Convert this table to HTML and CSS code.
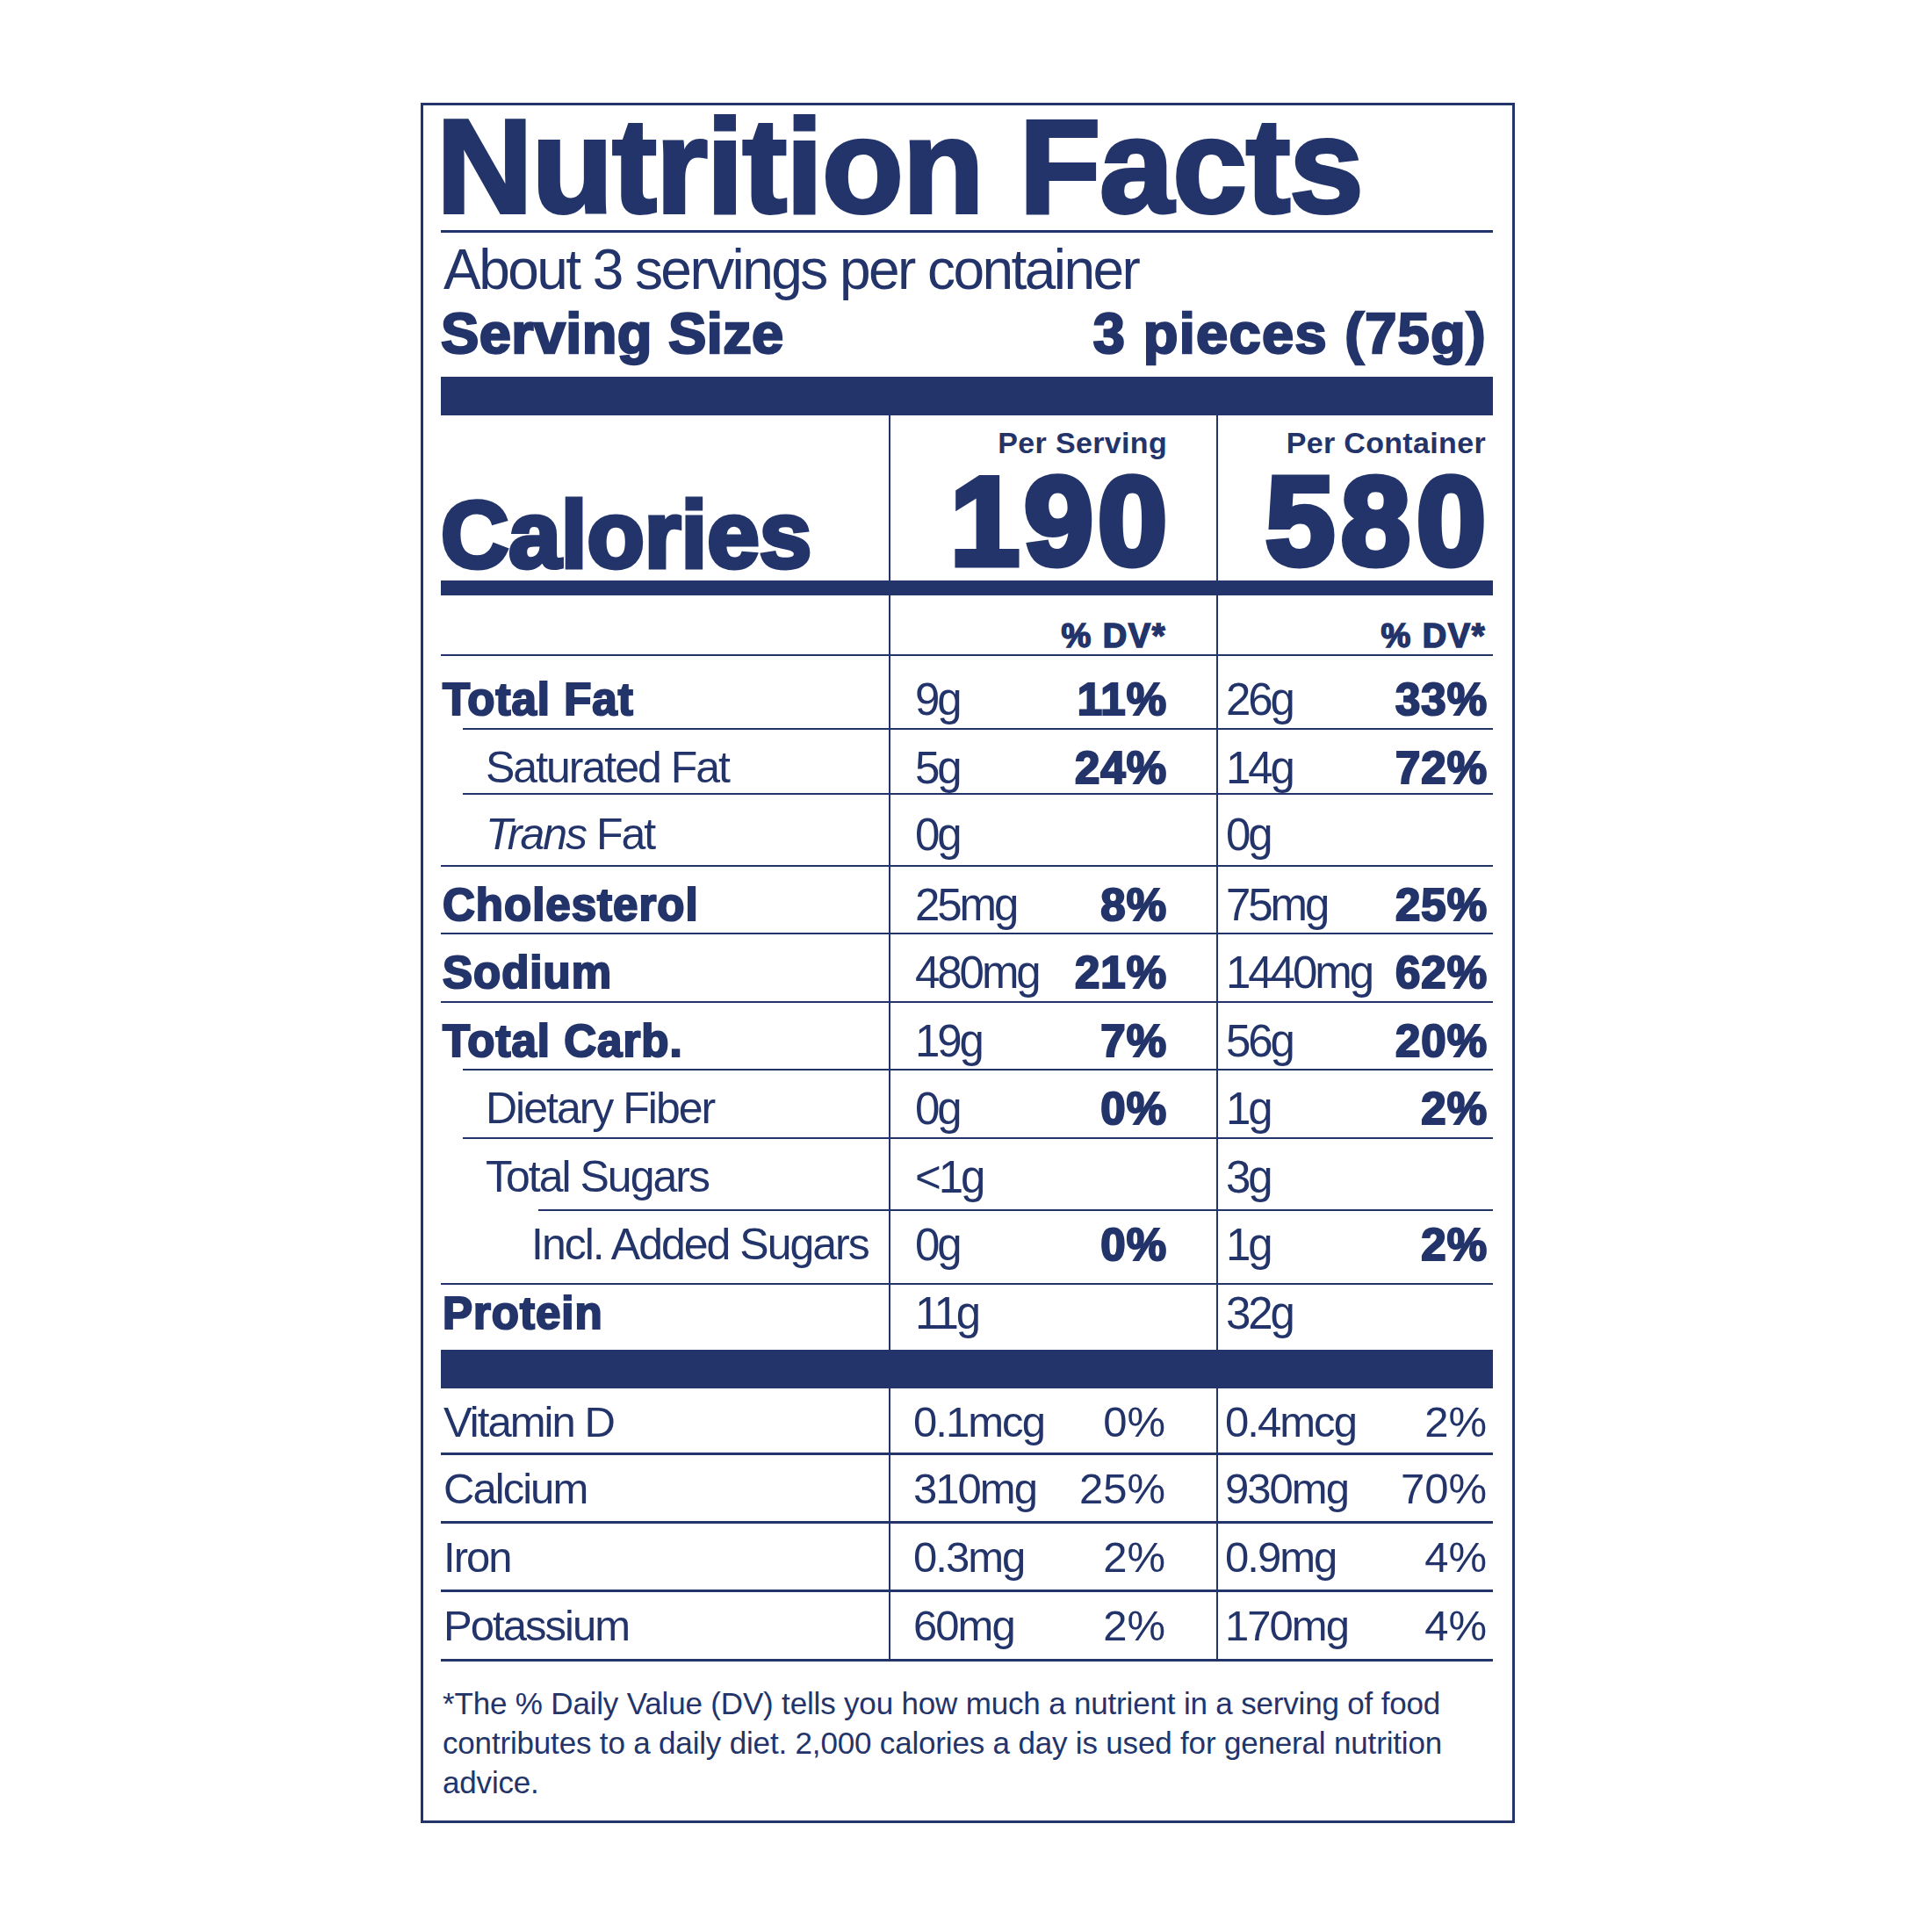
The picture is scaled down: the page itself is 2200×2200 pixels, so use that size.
FILE: index.html
```html
<!DOCTYPE html>
<html lang="en">
<head>
<meta charset="utf-8">
<title>Nutrition Facts</title>
<link rel="stylesheet" href="styles.css">
</head>
<body>
<div class="label">
  <h1 class="title">Nutrition Facts</h1>
  <div class="rule"></div>
  <div class="servings">About 3 servings per container</div>
  <div class="serving-size"><span class="ss-label">Serving Size</span><span class="ss-value">3 pieces (75g)</span></div>
  <div class="bar bar-lg"></div>

  <div class="grid3 cal">
    <div class="cal-name">Calories</div>
    <div class="cal-col serv"><div class="cal-head">Per Serving</div><div class="cal-num">190</div></div>
    <div class="cal-col cont"><div class="cal-head">Per Container</div><div class="cal-num">580</div></div>
  </div>
  <div class="bar bar-md"></div>

  <div class="grid3 nutrients">
    <div class="row head">
      <div class="name"></div>
      <div class="val c2">% DV*</div>
      <div class="val c3">% DV*</div>
    </div>
    <div class="row first ind1">
      <div class="name bold">Total Fat</div>
      <div class="val c2"><span class="amt">9g</span><span class="dv">11%</span></div>
      <div class="val c3"><span class="amt">26g</span><span class="dv">33%</span></div>
    </div>
    <div class="row ind1">
      <div class="name sub">Saturated Fat</div>
      <div class="val c2"><span class="amt">5g</span><span class="dv">24%</span></div>
      <div class="val c3"><span class="amt">14g</span><span class="dv">72%</span></div>
    </div>
    <div class="row trans">
      <div class="name sub"><i>Trans</i> Fat</div>
      <div class="val c2"><span class="amt">0g</span></div>
      <div class="val c3"><span class="amt">0g</span></div>
    </div>
    <div class="row">
      <div class="name bold">Cholesterol</div>
      <div class="val c2"><span class="amt">25mg</span><span class="dv">8%</span></div>
      <div class="val c3"><span class="amt">75mg</span><span class="dv">25%</span></div>
    </div>
    <div class="row">
      <div class="name bold">Sodium</div>
      <div class="val c2"><span class="amt">480mg</span><span class="dv">21%</span></div>
      <div class="val c3"><span class="amt">1440mg</span><span class="dv">62%</span></div>
    </div>
    <div class="row ind1">
      <div class="name bold">Total Carb.</div>
      <div class="val c2"><span class="amt">19g</span><span class="dv">7%</span></div>
      <div class="val c3"><span class="amt">56g</span><span class="dv">20%</span></div>
    </div>
    <div class="row ind1">
      <div class="name sub">Dietary Fiber</div>
      <div class="val c2"><span class="amt">0g</span><span class="dv">0%</span></div>
      <div class="val c3"><span class="amt">1g</span><span class="dv">2%</span></div>
    </div>
    <div class="row ind2">
      <div class="name sub">Total Sugars</div>
      <div class="val c2"><span class="amt">&lt;1g</span></div>
      <div class="val c3"><span class="amt">3g</span></div>
    </div>
    <div class="row added">
      <div class="name added-name">Incl. Added Sugars</div>
      <div class="val c2"><span class="amt">0g</span><span class="dv">0%</span></div>
      <div class="val c3"><span class="amt">1g</span><span class="dv">2%</span></div>
    </div>
    <div class="row protein">
      <div class="name bold">Protein</div>
      <div class="val c2"><span class="amt">11g</span></div>
      <div class="val c3"><span class="amt">32g</span></div>
    </div>
  </div>
  <div class="bar bar-lg"></div>

  <div class="grid3 vitamins">
    <div class="row">
      <div class="name">Vitamin D</div>
      <div class="val c2"><span class="amt">0.1mcg</span><span class="dv">0%</span></div>
      <div class="val c3"><span class="amt">0.4mcg</span><span class="dv">2%</span></div>
    </div>
    <div class="row">
      <div class="name">Calcium</div>
      <div class="val c2"><span class="amt">310mg</span><span class="dv">25%</span></div>
      <div class="val c3"><span class="amt">930mg</span><span class="dv">70%</span></div>
    </div>
    <div class="row">
      <div class="name">Iron</div>
      <div class="val c2"><span class="amt">0.3mg</span><span class="dv">2%</span></div>
      <div class="val c3"><span class="amt">0.9mg</span><span class="dv">4%</span></div>
    </div>
    <div class="row">
      <div class="name">Potassium</div>
      <div class="val c2"><span class="amt">60mg</span><span class="dv">2%</span></div>
      <div class="val c3"><span class="amt">170mg</span><span class="dv">4%</span></div>
    </div>
  </div>

  <p class="footnote">*The % Daily Value (DV) tells you how much a nutrient in a serving of food contributes to a daily diet. 2,000 calories a day is used for general nutrition advice.</p>
</div>
</body>
</html>
```
FILE: styles.css
```css
:root {
  --navy: #23346a;
}

html, body {
  margin: 0;
  padding: 0;
  background: #ffffff;
}

body {
  font-family: "Liberation Sans", Arial, Helvetica, sans-serif;
  color: var(--navy);
}

.label {
  box-sizing: content-box;
  width: 1198px;
  margin: 117px 0 0 479px;
  padding: 0 22px 0 20px;
  border: 3px solid var(--navy);
}

.title {
  margin: 0 0 0 -5px;
  padding-bottom: 3px;
  font-size: 152px;
  line-height: 139px;
  font-weight: 700;
  letter-spacing: -1.2px;
  white-space: nowrap;
  -webkit-text-stroke: 4px var(--navy);
}

.rule {
  height: 3px;
  background: var(--navy);
}

.servings {
  padding-left: 3px;
  font-size: 64px;
  line-height: 84px;
  letter-spacing: -0.04em;
  white-space: nowrap;
}

.serving-size {
  display: flex;
  justify-content: space-between;
  margin-bottom: 19px;
  padding-right: 8px;
  font-size: 65px;
  line-height: 61px;
  font-weight: 700;
  white-space: nowrap;
  -webkit-text-stroke: 2.5px var(--navy);
}

.ss-label {
  letter-spacing: 0.005em;
}

.ss-value {
  letter-spacing: 0.02em;
  margin-right: -1px;
}

.bar {
  background: var(--navy);
}

.bar-lg {
  height: 44px;
}

.bar-md {
  height: 17px;
}

.grid3 {
  display: grid;
  grid-template-columns: 510px 373px 315px;
}

/* Calories block */
.cal {
  height: 188px;
}

.cal-name {
  display: flex;
  align-items: flex-end;
  padding-bottom: 7px;
  font-size: 107px;
  line-height: 90px;
  font-weight: 700;
  letter-spacing: 0;
  white-space: nowrap;
  -webkit-text-stroke: 5px var(--navy);
}

.cal-col {
  display: flex;
  flex-direction: column;
  align-items: flex-end;
  padding-top: 14px;
  border-left: 2px solid var(--navy);
}

.cal-col.serv {
  padding-right: 56px;
}

.cal-col.cont {
  padding-right: 8px;
}

.cal-head {
  font-size: 34px;
  line-height: 34px;
  font-weight: 700;
  letter-spacing: 0.01em;
  white-space: nowrap;
}

.cal-num {
  margin-top: 13px;
  font-size: 142px;
  line-height: 120px;
  font-weight: 700;
  white-space: nowrap;
  -webkit-text-stroke: 7px var(--navy);
}

.cal-col.serv .cal-num {
  letter-spacing: 5px;
  margin-right: -5px;
}

.cal-col.cont .cal-num {
  letter-spacing: 7px;
  margin-right: -7px;
}

/* Nutrient rows */
.nutrients {
  grid-template-rows: 69px 84px 74px 82px 77px 78px 77px 78px 82px 84px 74px;
}

.vitamins {
  grid-template-rows: 76px 78px 78px 79px;
}

.row {
  display: contents;
}

.name {
  box-sizing: border-box;
  padding-top: 18px;
  font-size: 50px;
  line-height: 51px;
  letter-spacing: -0.04em;
  white-space: nowrap;
  background: linear-gradient(var(--navy), var(--navy)) right bottom / calc(100% - var(--indent, 0px)) 2px no-repeat;
}

.name.bold {
  padding-left: 2px;
  font-size: 51px;
  font-weight: 700;
  letter-spacing: 1px;
  -webkit-text-stroke: 2.2px var(--navy);
}

.name.sub {
  padding-left: 51px;
}

.name.added-name {
  padding-left: 103px;
}

.val {
  box-sizing: border-box;
  display: flex;
  justify-content: space-between;
  padding-top: 18px;
  font-size: 51px;
  line-height: 51px;
  white-space: nowrap;
  border-left: 2px solid var(--navy);
  border-bottom: 2px solid var(--navy);
}

.val.c2 {
  padding-left: 28px;
  padding-right: 57px;
}

.val.c3 {
  padding-left: 9px;
  padding-right: 7px;
}

.amt {
  letter-spacing: -0.06em;
}

.dv {
  font-weight: 700;
  letter-spacing: 1px;
  margin-right: -1px;
  -webkit-text-stroke: 2.2px var(--navy);
}

.ind1 {
  --indent: 25px;
}

.ind2 {
  --indent: 111px;
}

.row.first > .name,
.row.first > .val {
  padding-top: 24px;
}

.row.trans > .name,
.row.trans > .val {
  padding-top: 20px;
}

.row.added > .name,
.row.added > .val {
  padding-top: 13px;
}

.row.protein > .name,
.row.protein > .val {
  padding-top: 7px;
}

.row.protein > .name {
  background: none;
}

.row.protein > .val {
  border-bottom: none;
}

.row.head > .val {
  justify-content: flex-end;
  padding-top: 27px;
  font-size: 38px;
  line-height: 38px;
  font-weight: 700;
  letter-spacing: 0.04em;
  -webkit-text-stroke: 1.6px var(--navy);
}

.row.head > .val.c2 {
  padding-right: 57px;
}

.row.head > .val.c3 {
  padding-right: 8px;
}

/* Vitamins */
.vitamins .name {
  padding-top: 14px;
  padding-left: 3px;
  font-size: 49px;
  line-height: 49px;
  background: none;
  border-bottom: 3px solid var(--navy);
}

.vitamins .val {
  padding-top: 14px;
  font-size: 49px;
  line-height: 49px;
  border-bottom-width: 3px;
}

.vitamins .val.c2 {
  padding-left: 26px;
  padding-right: 58px;
}

.vitamins .val.c3 {
  padding-left: 8px;
  padding-right: 7px;
}

.vitamins .amt {
  letter-spacing: -0.04em;
}

.vitamins .dv {
  font-weight: 400;
  letter-spacing: 0;
  margin-right: 0;
  -webkit-text-stroke: 0;
}

.footnote {
  margin: 0;
  padding: 25px 0 21px 2px;
  font-size: 35px;
  line-height: 45px;
  letter-spacing: -0.005em;
}
```
